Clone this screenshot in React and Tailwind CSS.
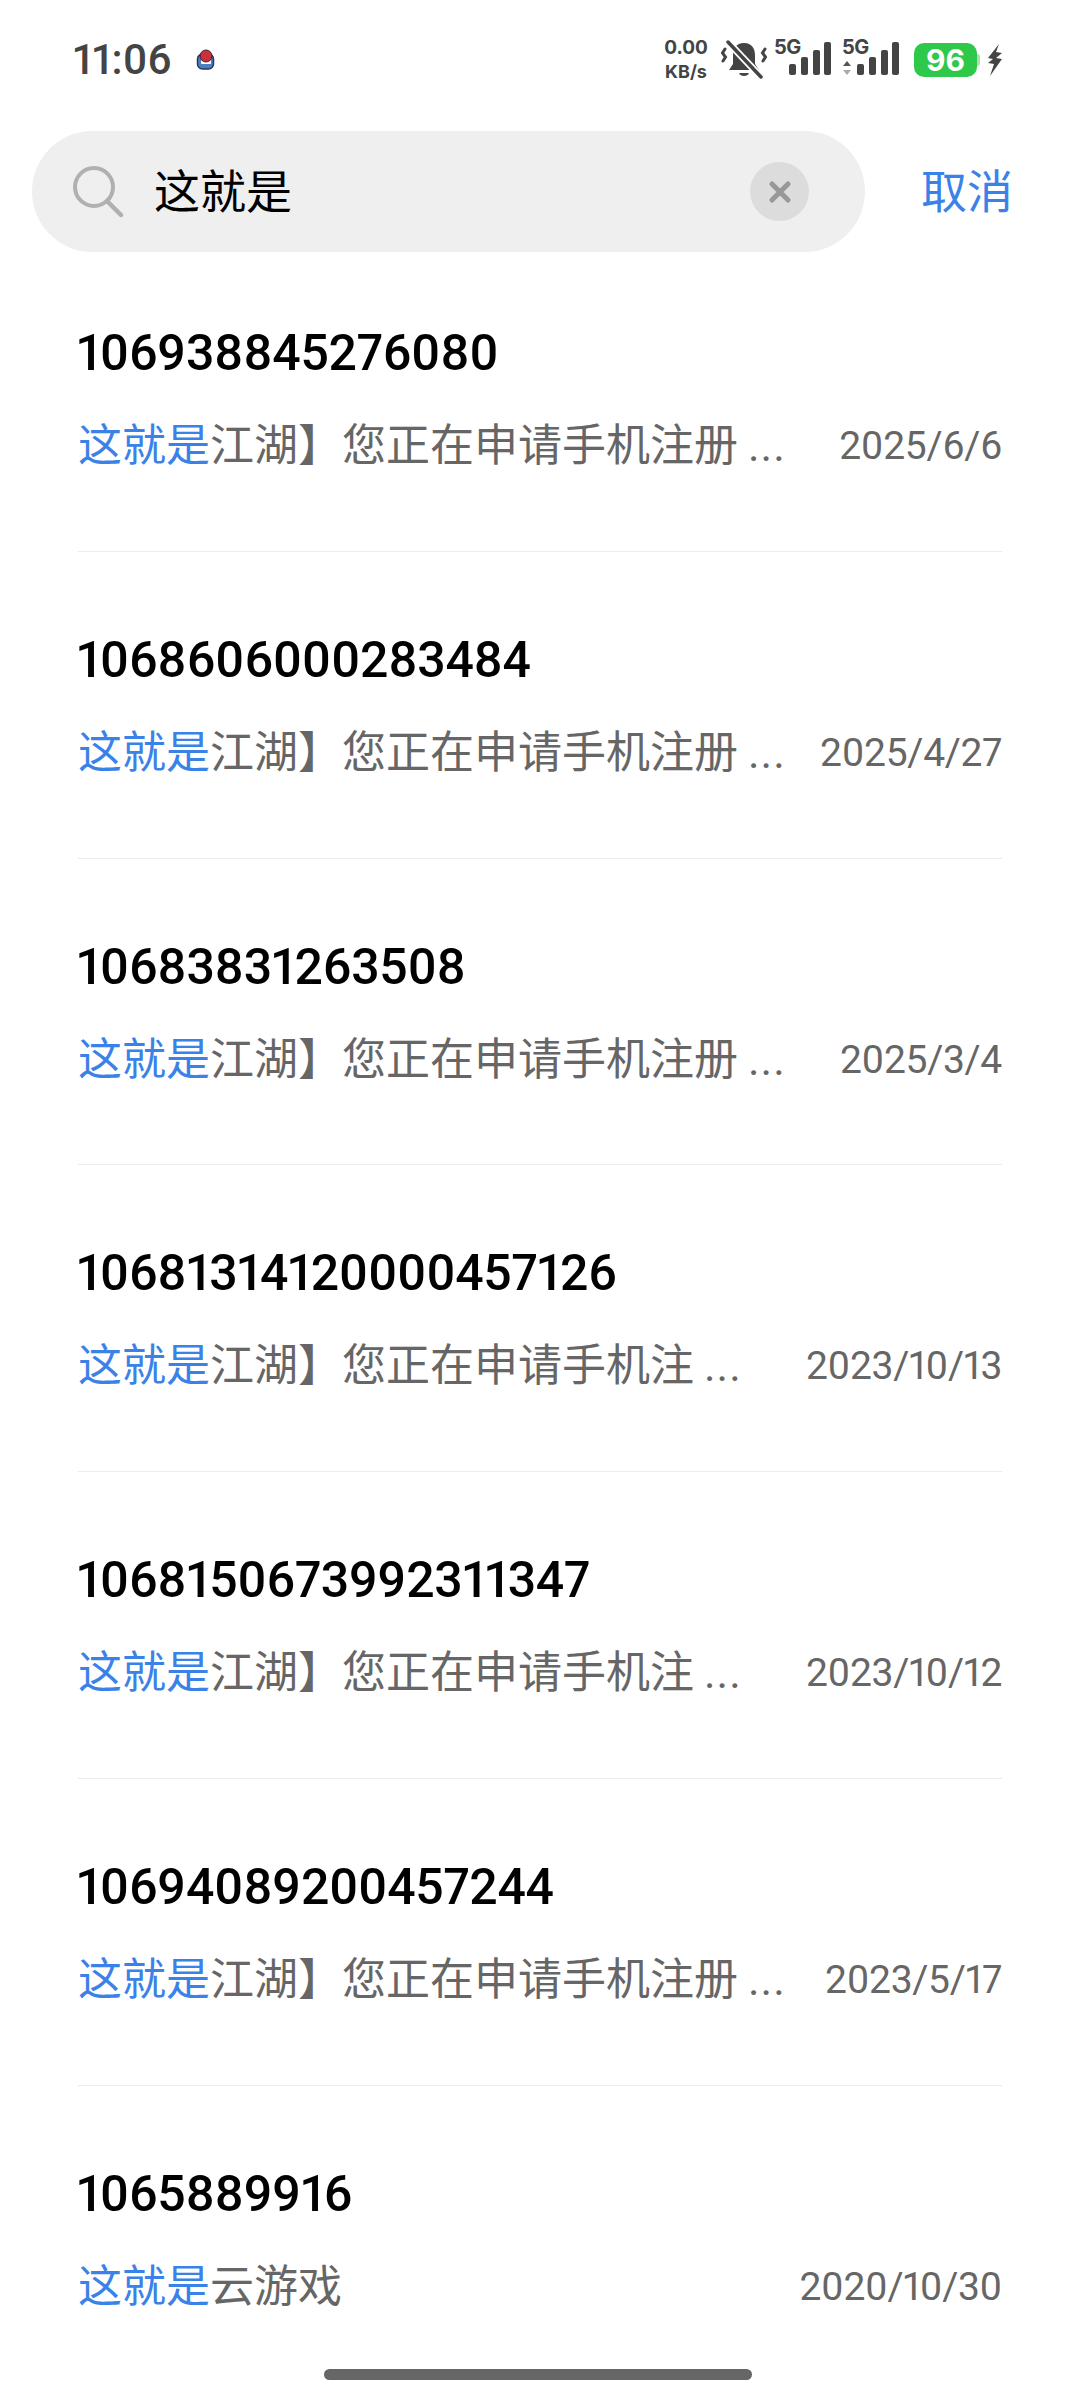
const messages = [
  { number: "106938845276080", rest: "江湖】您正在申请手机注册", cut: true, date: "2025/6/6" },
  { number: "1068606000283484", rest: "江湖】您正在申请手机注册", cut: true, date: "2025/4/27" },
  { number: "10683831263508", rest: "江湖】您正在申请手机注册", cut: true, date: "2025/3/4" },
  { number: "10681314120000457126", rest: "江湖】您正在申请手机注", cut: true, date: "2023/10/13" },
  { number: "1068150673992311347", rest: "江湖】您正在申请手机注", cut: true, date: "2023/10/12" },
  { number: "10694089200457244", rest: "江湖】您正在申请手机注册", cut: true, date: "2023/5/17" },
  { number: "1065889916", rest: "云游戏", date: "2020/10/30" },
]

const cjk = "font-['Roboto','Noto_Sans_CJK_SC',sans-serif]"

const SignalIcon = ({ arrows }) => (
  <div className="relative w-[58px] h-[38px]">
    <span className="absolute left-0 top-[-4px] text-[20px] leading-[20px] font-bold text-[#444] font-['Inter',sans-serif] tracking-[-0.5px]">5G</span>
    <svg width="58" height="38" viewBox="0 0 58 38" className="absolute left-0 top-0">
      {arrows && (
        <g>
          <path d="M1 25 L5 20 L9 25 Z" fill="#555" />
          <path d="M1 29 L9 29 L5 34 Z" fill="#aaa" />
        </g>
      )}
      <rect x="15" y="23" width="7" height="11" rx="2" fill="#444" />
      <rect x="27" y="16" width="7" height="18" rx="2" fill="#444" />
      <rect x="39" y="9" width="7" height="25" rx="2" fill="#444" />
      <rect x="50" y="1" width="7" height="33" rx="2" fill="#444" />
    </svg>
  </div>
)

const StatusBar = () => (
  <div className="h-[120px] flex items-center justify-between pl-[73px] pr-[77px]">
    <div className="flex items-center">
      <span className="text-[42px] font-medium text-[#444] font-['Roboto',sans-serif] leading-none proportional-nums">11:06</span>
      <svg width="20" height="22" viewBox="0 0 20 22" className="ml-[24px]">
        <rect x="1.5" y="5" width="16" height="15" rx="5" fill="#4a7fc0" stroke="#24395c" strokeWidth="1.5" />
        <rect x="5" y="11" width="10" height="4" rx="1" fill="#fff" />
        <circle cx="10" cy="7" r="6" fill="#c9303a" stroke="#4a2030" strokeWidth="1" />
      </svg>
    </div>
    <div className="flex items-center">
      <div className="flex flex-col items-center w-[46px] text-[19px] leading-[24px] font-bold text-[#444] font-['Inter',sans-serif]">
        <span>0.00</span>
        <span className="text-[18px]">KB/s</span>
      </div>
      <svg width="46" height="40" viewBox="0 0 46 40" className="ml-[12px]" fill="none">
        <path d="M23 3 C15 3 12 9 12 15 L12 24 L8 30 L38 30 L34 24 L34 15 C34 9 31 3 23 3 Z" fill="#444" />
        <path d="M18 33 L28 33 C27 37 19 37 18 33 Z" fill="#444" />
        <path d="M7 2 L40 37" stroke="#fff" strokeWidth="7" />
        <path d="M7 2 L40 37" stroke="#444" strokeWidth="3.5" strokeLinecap="round" />
        <path d="M4 9 L1.5 13 L4.5 17 L2 21" stroke="#444" strokeWidth="3" strokeLinecap="round" />
        <path d="M44 9 L41.5 13 L44.5 17 L42 21" stroke="#444" strokeWidth="3" strokeLinecap="round" />
      </svg>
      <div className="ml-[7px]"><SignalIcon /></div>
      <div className="ml-[10px]"><SignalIcon arrows /></div>
      <div className="ml-[14px] flex items-center">
        <div className="w-[63px] h-[34px] rounded-[10px] bg-[#2ec84a] flex items-center justify-center text-white text-[30px] font-bold font-['Inter',sans-serif] leading-none">96</div>
        <div className="w-[3px] h-[12px] rounded-r-sm bg-[#b5d8bb]"></div>
      </div>
      <svg width="16" height="32" viewBox="0 0 16 32" className="ml-[7px]">
        <path d="M12 0 L1 14 L6 15 L1 19 L7 20 L3 32 L15 15 L9 14 L15 9 L9 8 Z" fill="#444" />
      </svg>
    </div>
  </div>
)

const SearchBar = () => (
  <div className="mt-[11px] flex items-center pl-[32px] pr-[67px]">
    <div className="w-[833px] h-[121px] rounded-full bg-[#efefef] flex items-center pl-[41px] pr-[56px]">
      <svg width="52" height="52" viewBox="0 0 52 52" fill="none" className="shrink-0">
        <circle cx="21" cy="21" r="19" stroke="#b0b0b0" strokeWidth="4" />
        <path d="M34 35 L48 49" stroke="#b0b0b0" strokeWidth="4.5" strokeLinecap="round" />
      </svg>
      <span className={`ml-[29px] flex-1 text-[46px] leading-none text-black ${cjk}`}>这就是</span>
      <div className="w-[59px] h-[59px] rounded-full bg-[#dcdcdc] flex items-center justify-center">
        <svg width="24" height="24" viewBox="0 0 24 24" fill="none">
          <path d="M4 4 L20 20 M20 4 L4 20" stroke="#989898" strokeWidth="5" strokeLinecap="round" />
        </svg>
      </div>
    </div>
    <span className={`ml-auto text-[46px] leading-none text-[#3b82e8] ${cjk}`}>取消</span>
  </div>
)

const MessageRow = ({ number, rest, cut, date, last }) => (
  <div className={`h-[306.8px] mx-[78px] pt-[78px] ${last ? "" : "border-b border-[#ececec]"}`}>
    <div className="text-[50px] leading-[60px] font-medium text-black font-['Roboto',sans-serif] proportional-nums tracking-[-0.3px] -ml-[1px]">{number}</div>
    <div className="mt-[32px] flex items-center justify-between leading-[62px]">
      <div className={`text-[44px] text-[#666] whitespace-nowrap ${cjk}`}>
        <span className="text-[#3b82e8]">这就是</span>{rest}
        {cut && <span className="ml-[10px] tracking-[1px]">...</span>}
      </div>
      <div className="text-[39px] text-[#666] font-['Roboto',sans-serif] proportional-nums tracking-[-0.3px]">{date}</div>
    </div>
  </div>
)

export default function App() {
  return (
    <div className="relative w-[1080px] h-[2400px] overflow-hidden bg-white">
      <StatusBar />
      <SearchBar />
      <div className="mt-[-7px]">
        {messages.map((m, i) => (
          <MessageRow key={m.number} {...m} last={i === messages.length - 1} />
        ))}
      </div>
      <div className="absolute left-[324px] top-[2369px] w-[428px] h-[11px] rounded-full bg-[#666]"></div>
    </div>
  )
}
